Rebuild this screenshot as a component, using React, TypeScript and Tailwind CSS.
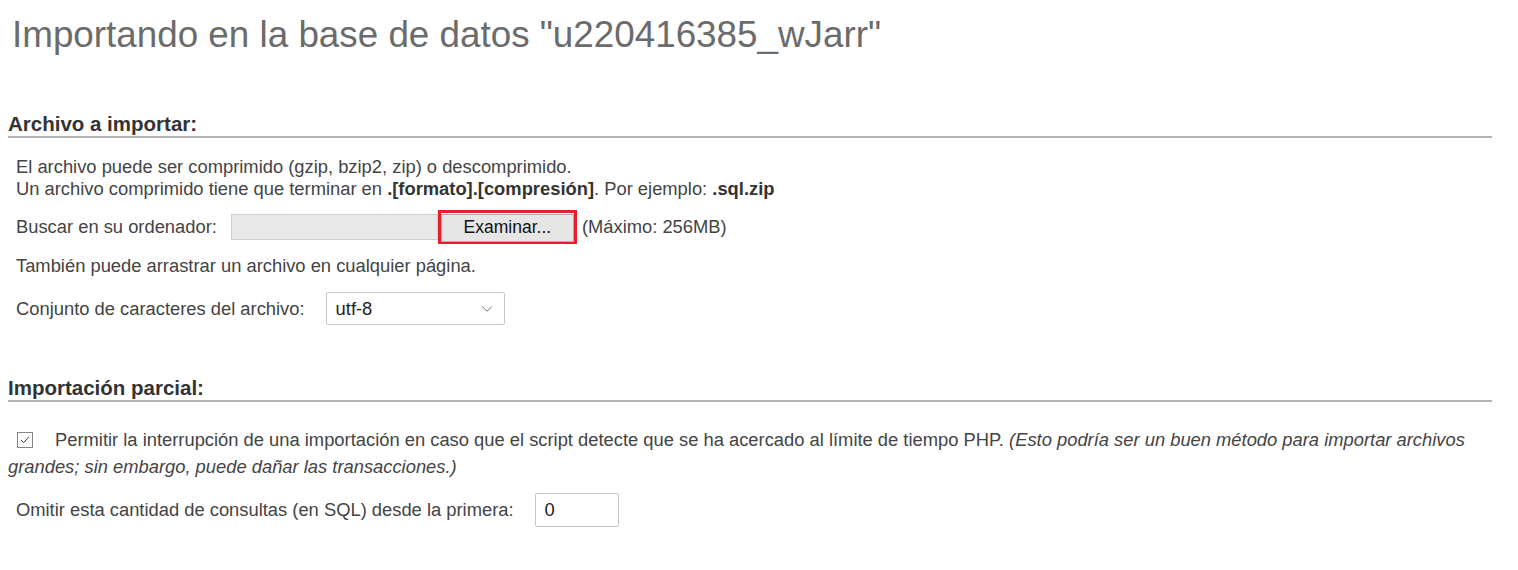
import React from 'react';
import { ChevronDown } from 'lucide-react';

const font = "font-['Liberation_Sans',Arial,sans-serif]";

function SectionHeading({ children, className }: { children: React.ReactNode; className?: string }) {
  return (
    <h3 className={`text-[20.5px] leading-[24px] font-bold text-[#333] border-b-2 border-[#b4b4b4] ${className ?? ''}`}>
      {children}
    </h3>
  );
}

export default function App() {
  return (
    <div className={`${font} bg-white min-h-[570px] text-[18.35px] text-[#444] pl-2 w-[1492px]`}>
      <h1 className="pt-[13px] pl-1 text-[36.8px] leading-[43px] font-normal text-[#6b6b6b]">
        Importando en la base de datos "u220416385_wJarr"
      </h1>

      {/* Archivo a importar */}
      <SectionHeading className="mt-[56px]">Archivo a importar:</SectionHeading>
      <div className="pl-2">
        <p className="mt-[18px] leading-[22px]">
          El archivo puede ser comprimido (gzip, bzip2, zip) o descomprimido.
          <br />
          Un archivo comprimido tiene que terminar en <b className="text-[#333]">.[formato].[compresión]</b>. Por ejemplo: <b className="text-[#333]">.sql.zip</b>
        </p>

        <div className="mt-[10px] flex items-center h-[34px]">
          <span>Buscar en su ordenador:</span>
          <div className="ml-[14px] w-[207px] h-[26px] bg-[#e8e8e8] border border-[#cfcfcf]" />
          <div className="border-[3px] border-[#e5202a] h-[34px] w-[139px]">
            <button className="w-full h-full bg-[#e6e6e6] border border-[#adadad] text-[#111] text-[17.5px] leading-none">
              Examinar...
            </button>
          </div>
          <span className="ml-[5px]">(Máximo: 256MB)</span>
        </div>

        <p className="mt-[11px] leading-[22px]">También puede arrastrar un archivo en cualquier página.</p>

        <div className="mt-[15px] flex items-center h-[33px]">
          <span>Conjunto de caracteres del archivo:</span>
          <div className="ml-[21px] w-[179px] h-[33px] border border-[#c8c8c8] rounded-[2px] flex items-center justify-between pl-[9px] pr-[8px] text-[#222]">
            <span>utf-8</span>
            <ChevronDown size={18} strokeWidth={1.1} className="text-[#555]" />
          </div>
        </div>
      </div>

      {/* Importación parcial */}
      <SectionHeading className="mt-[51px]">Importación parcial:</SectionHeading>
      <p className="mt-[24px] leading-[27px]">
        <span className="inline-block align-[-2px] ml-[9px] mr-[22px] w-[16px] h-[16px] border border-[#858585] bg-white relative">
          <svg viewBox="0 0 16 16" className="absolute inset-0 w-full h-full">
            <path d="M3.3 7.9 L6.5 11.1 L12.4 4.2" fill="none" stroke="#333" strokeWidth="1.1" />
          </svg>
        </span>
        Permitir la interrupción de una importación en caso que el script detecte que se ha acercado al límite de tiempo PHP.{' '}
        <i>(Esto podría ser un buen método para importar archivos grandes; sin embargo, puede dañar las transacciones.)</i>
      </p>

      <div className="mt-[13px] pl-2 flex items-center h-[34px]">
        <span>Omitir esta cantidad de consultas (en SQL) desde la primera:</span>
        <div className="ml-[21px] w-[84px] h-[34px] border border-[#c8c8c8] rounded-[2px] flex items-center pl-[9px] text-[#222]">
          0
        </div>
      </div>
    </div>
  );
}
